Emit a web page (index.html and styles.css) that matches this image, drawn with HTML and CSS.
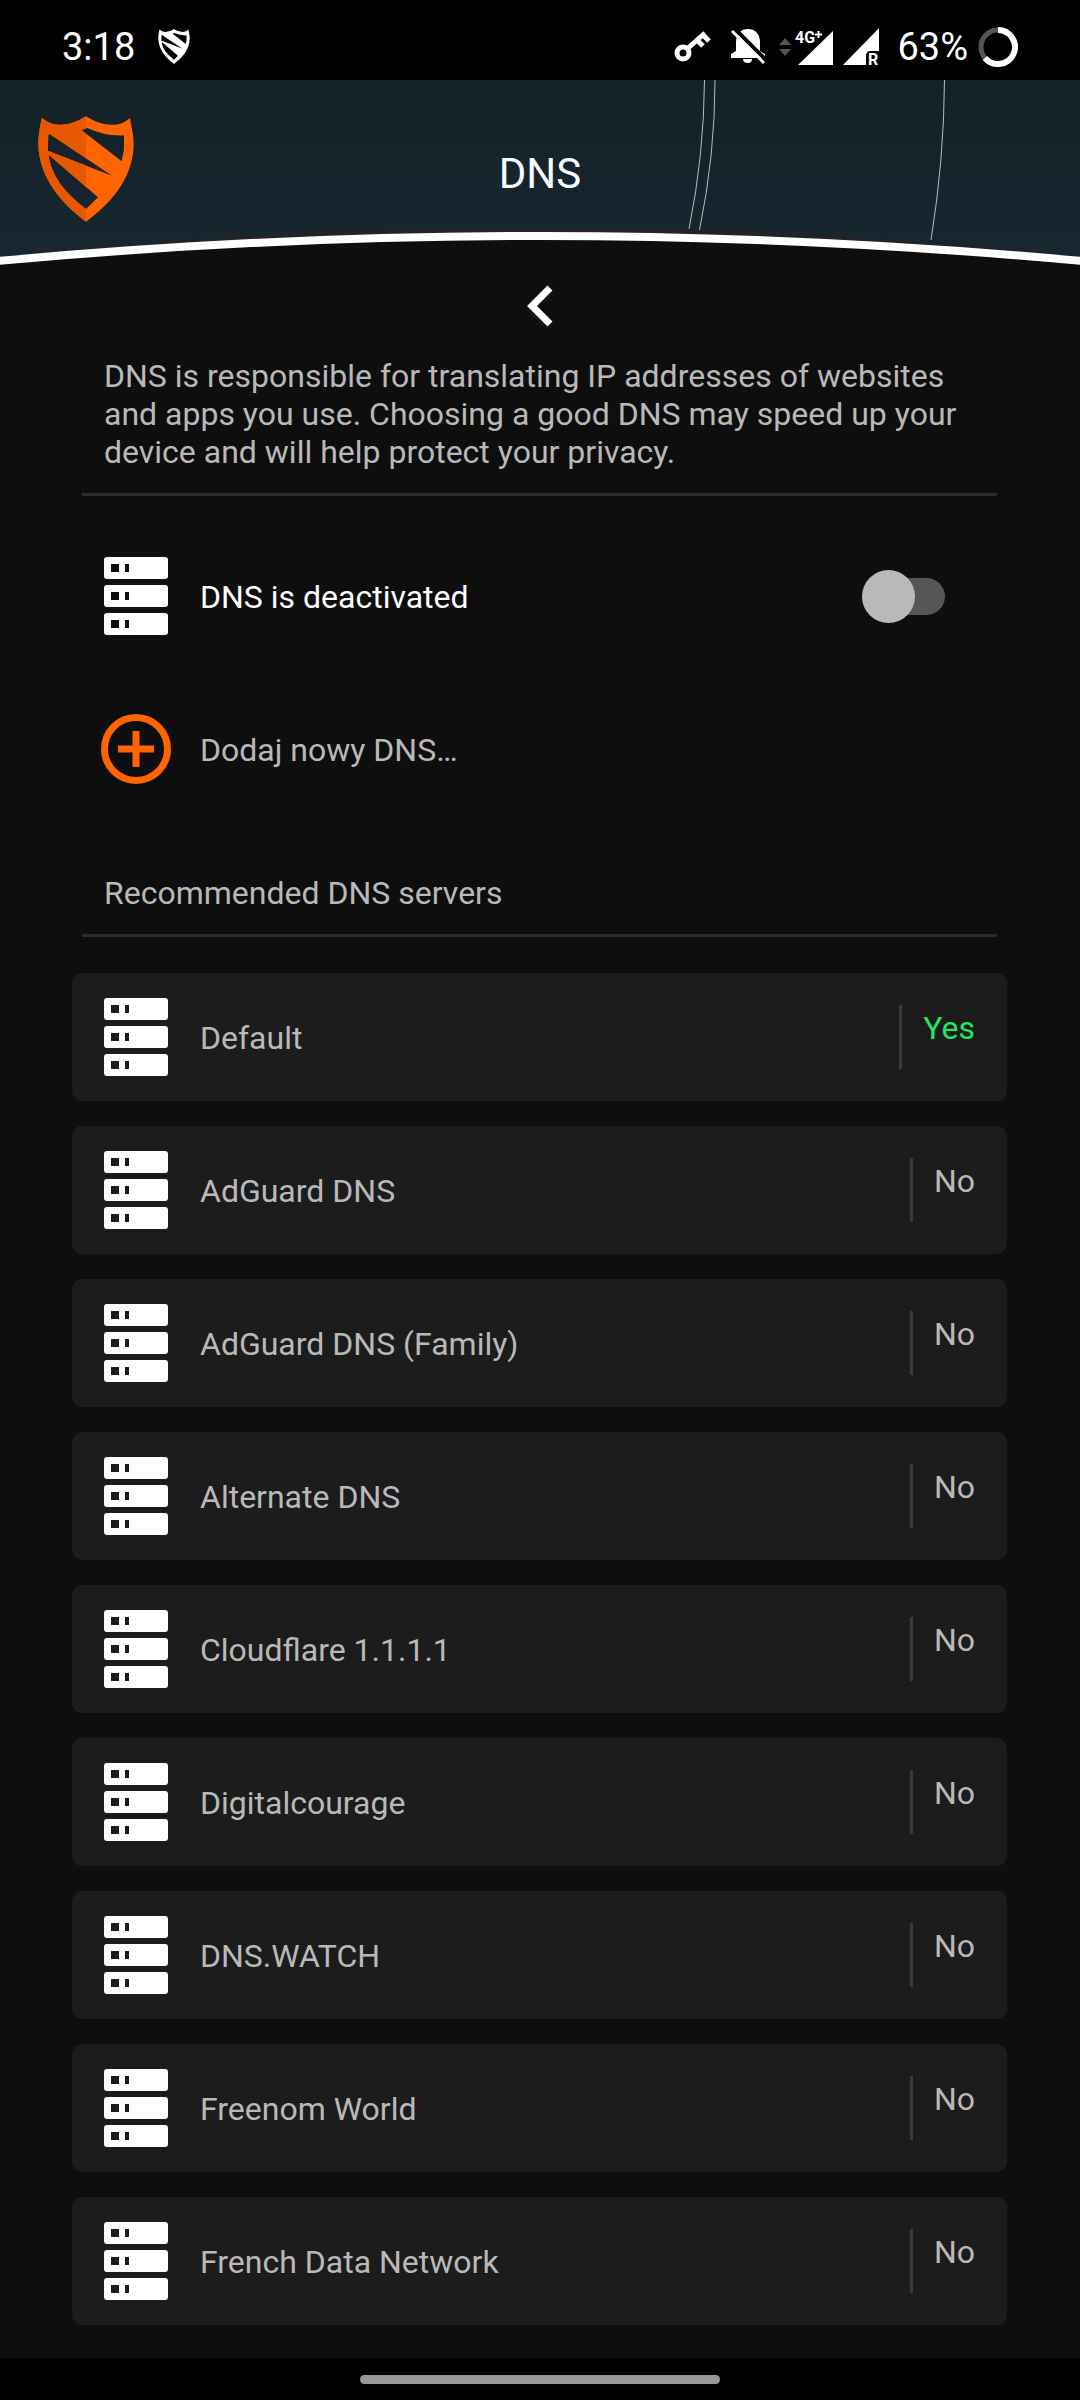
FILE: index.html
```html
<!DOCTYPE html>
<html lang="en">
<head>
<meta charset="utf-8">
<meta name="viewport" content="width=device-width, initial-scale=1">
<title>DNS</title>
<link rel="stylesheet" href="styles.css">
</head>
<body>
<svg class="sprite" aria-hidden="true">
  <symbol id="server" viewBox="0 0 64 78">
    <path fill="currentColor" fill-rule="evenodd" d="M3 0H61a3 3 0 0 1 3 3V19a3 3 0 0 1-3 3H3a3 3 0 0 1-3-3V3a3 3 0 0 1 3-3ZM7 7V15H15V7ZM21 7V15H25V7ZM3 28H61a3 3 0 0 1 3 3V47a3 3 0 0 1-3 3H3a3 3 0 0 1-3-3V31a3 3 0 0 1 3-3ZM7 35V43H15V35ZM21 35V43H25V35ZM3 56H61a3 3 0 0 1 3 3V75a3 3 0 0 1-3 3H3a3 3 0 0 1-3-3V59a3 3 0 0 1 3-3ZM7 63V71H15V63ZM21 63V71H25V63Z"/>
  </symbol>
  <symbol id="shield" viewBox="112 349 288 318">
    <path fill="currentColor" fill-rule="evenodd" d="M124 354C160 388 212 378 256 350C300 378 354 388 388 354C391 380 399 400 399 435C396 540 330 610 256 666C180 610 113 530 113 430C114 400 118 380 124 354ZM242 391L260 385Q310 409 370 407L370 450L363 485ZM147 403L334 528L141 453L143 405ZM144 465L292 593L256 628C200 585 150 530 144 465Z"/>
  </symbol>
</svg>

<div class="status-bar">
  <span class="clock">3:18</span>
  <svg class="status-shield" aria-hidden="true"><use href="#shield"/></svg>
  <div class="status-icons">
    <svg width="37" height="34" viewBox="0 0 37 34" aria-hidden="true">
      <circle cx="9" cy="23" r="6" fill="none" stroke="#fff" stroke-width="5"/>
      <path d="M13 19 31 3M23 10l6 6M29 5l6 6" fill="none" stroke="#fff" stroke-width="5"/>
    </svg>
    <svg class="bell" width="36" height="36" viewBox="0 0 36 36" aria-hidden="true">
      <path fill="#fff" d="M18 0C10 0 6 6 6 13V22L1 25V29H35V25L30 22V13C30 6 26 0 18 0ZM13 30H22Q22 34 18 34Q13 34 13 30Z"/>
      <path d="M4-1 36 31" stroke="#000" stroke-width="4"/>
      <path d="M2 2 34 34" stroke="#fff" stroke-width="3"/>
    </svg>
    <svg class="traffic" width="12" height="18" viewBox="0 0 12 18" aria-hidden="true">
      <path fill="#555" d="M6 0 12 7H0ZM6 18 0 11H12Z"/>
    </svg>
    <svg class="signal" width="38" height="38" viewBox="0 0 38 38" role="img" aria-label="4G+ signal">
      <path fill="#fff" d="M38 3V37H3Z"/>
      <text class="net-label" x="0" y="15">4G</text>
      <path d="M23 6.500H29M26 3.500V9.500" stroke="#000" stroke-width="6"/>
      <path d="M20 6.500H27M23.500 3V10" stroke="#fff" stroke-width="2"/>
    </svg>
    <svg class="roaming" width="36" height="38" viewBox="0 0 36 38" role="img" aria-label="Roaming signal">
      <path fill="#fff" d="M36 0V37H0Z"/>
      <path d="M23 38V28Q23 23 28 23H37V38Z"/>
      <text class="net-label" x="25" y="37">R</text>
    </svg>
    <span class="battery-level">63%</span>
    <svg width="40" height="40" viewBox="0 0 40 40" aria-hidden="true">
      <circle cx="20" cy="20" r="17" fill="none" stroke="#555" stroke-width="5"/>
      <path d="M20 3A17 17 0 1 1 7 31" fill="none" stroke="#fff" stroke-width="6"/>
    </svg>
  </div>
</div>

<header class="hero">
  <svg class="hero-art" viewBox="0 0 1080 190" preserveAspectRatio="none" aria-hidden="true">
    <defs>
      <linearGradient id="sky" x1="0" y1="0" x2="0" y2="1">
        <stop offset="0" stop-color="#152128"/>
        <stop offset="1" stop-color="#172630"/>
      </linearGradient>
    </defs>
    <path fill="url(#sky)" d="M0 0H1080V180Q540 132 0 180Z"/>
    <path fill="#272323" d="M0 177Q540 119 1080 177V180Q540 132 0 180Z"/>
    <g fill="none" stroke="#b4bcc0" stroke-width="1">
      <path d="M704.500 0Q704 75 689 149"/>
      <path d="M715 0Q715 75 699.500 150"/>
      <path d="M944.500 0Q944 80 931 160"/>
    </g>
    <path fill="none" stroke="#fff" stroke-width="8" d="M-2 181Q540 131 1082 181"/>
  </svg>
  <svg class="logo" role="img" aria-label="Shield logo">
    <defs>
      <clipPath id="left-half"><rect width="48" height="106"/></clipPath>
    </defs>
    <use href="#shield" class="logo-base"/>
    <use href="#shield" class="logo-shade" clip-path="url(#left-half)"/>
  </svg>
  <h1>DNS</h1>
</header>

<main>
  <button class="back" type="button" aria-label="Back">
    <svg width="26" height="42" viewBox="0 0 26 42" aria-hidden="true"><path d="M23 3 5 21 23 39" fill="none" stroke="#fff" stroke-width="7"/></svg>
  </button>

  <p class="intro">DNS is responsible for translating IP addresses of websites and apps you use. Choosing a good DNS may speed up your device and will help protect your privacy.</p>

  <div class="actions">
    <div class="row">
      <svg class="server"><use href="#server"/></svg>
      <label class="name active" for="dns-toggle">DNS is deactivated</label>
      <input class="switch" id="dns-toggle" type="checkbox" role="switch">
    </div>
    <button class="row" type="button">
      <svg class="add" viewBox="0 0 70 70" aria-hidden="true">
        <circle cx="35" cy="35" r="31.500" fill="none" stroke="#ff6400" stroke-width="7"/>
        <path d="M35 17V53M17 35H53" stroke="#ff6400" stroke-width="7"/>
      </svg>
      <span class="name">Dodaj nowy DNS…</span>
    </button>
  </div>

  <h2>Recommended DNS servers</h2>

  <ul class="servers">
    <li><button class="row card" type="button"><svg class="server"><use href="#server"/></svg><span class="name">Default</span><span class="state on">Yes</span></button></li>
    <li><button class="row card" type="button"><svg class="server"><use href="#server"/></svg><span class="name">AdGuard DNS</span><span class="state">No</span></button></li>
    <li><button class="row card" type="button"><svg class="server"><use href="#server"/></svg><span class="name">AdGuard DNS (Family)</span><span class="state">No</span></button></li>
    <li><button class="row card" type="button"><svg class="server"><use href="#server"/></svg><span class="name">Alternate DNS</span><span class="state">No</span></button></li>
    <li><button class="row card" type="button"><svg class="server"><use href="#server"/></svg><span class="name">Cloudflare 1.1.1.1</span><span class="state">No</span></button></li>
    <li><button class="row card" type="button"><svg class="server"><use href="#server"/></svg><span class="name">Digitalcourage</span><span class="state">No</span></button></li>
    <li><button class="row card" type="button"><svg class="server"><use href="#server"/></svg><span class="name">DNS.WATCH</span><span class="state">No</span></button></li>
    <li><button class="row card" type="button"><svg class="server"><use href="#server"/></svg><span class="name">Freenom World</span><span class="state">No</span></button></li>
    <li><button class="row card" type="button"><svg class="server"><use href="#server"/></svg><span class="name">French Data Network</span><span class="state">No</span></button></li>
  </ul>
</main>

<div class="nav-bar"><div class="handle"></div></div>
</body>
</html>
```

FILE: styles.css
```css
* { box-sizing: border-box; }

body {
  margin: 0;
  min-height: 100vh;
  display: flex;
  flex-direction: column;
  background: #0e0e0e;
  color: #b9b9b9;
  font: 32px/38px Roboto, "Noto Sans", sans-serif;
}

svg { display: block; flex: none; }
.sprite { position: absolute; width: 0; height: 0; }

button {
  margin: 0;
  padding: 0;
  border: 0;
  background: none;
  color: inherit;
  font: inherit;
  text-align: left;
  cursor: pointer;
}

/* Status bar */
.status-bar {
  display: flex;
  align-items: center;
  height: 80px;
  padding: 13px 62px 0 62px;
  background: #000;
  color: #fff;
  font-size: 38px;
}
.status-shield { width: 32px; height: 35px; margin-left: 23px; }
.status-icons { display: flex; align-items: center; margin-left: auto; }
.bell { margin-left: 19px; }
.traffic { margin-left: 13px; }
.signal { margin-left: 4px; overflow: visible; }
.roaming { margin-left: 10px; overflow: visible; }
.net-label { fill: #fff; font-size: 16px; font-weight: 700; }
.battery-level { margin: 0 10px 0 18px; }

/* Header with curved lower edge */
.hero {
  position: relative;
  height: 190px;
  padding-top: 69px;
}
.hero-art { position: absolute; inset: 0; width: 100%; height: 100%; }
.logo { position: absolute; left: 38px; top: 36px; width: 96px; height: 106px; }
.logo-base { color: #ff6400; }
.logo-shade { color: #e85800; }
h1 {
  position: relative;
  margin: 0;
  color: #f4fbff;
  font-size: 42px;
  font-weight: 400;
  line-height: 50px;
  text-align: center;
}

/* Content */
main {
  flex: 1;
  display: flex;
  flex-direction: column;
  padding: 0 73px 33px 72px;
}
.back { align-self: center; padding: 15px 20px; }
.intro, h2 {
  margin: 0 10px;
  padding: 0 22px 22px;
  border-bottom: 3px solid #2c2c2c;
  font-size: 32px;
  font-weight: 400;
}
.intro { margin-top: 15px; }
h2 { margin-top: 61px; }

.actions {
  display: flex;
  flex-direction: column;
  gap: 25px;
  margin-top: 36px;
}
.row {
  display: flex;
  align-items: center;
  width: 100%;
  height: 128px;
  padding: 0 32px;
}
.server { width: 64px; height: 78px; color: #fff; }
.add { width: 70px; height: 70px; margin: 0 -3px; }
.name { flex: 1; padding: 2px 0 0 32px; }
.active { color: #fff; }

.switch {
  appearance: none;
  position: relative;
  width: 76px;
  height: 37px;
  margin: 0 30px 0 0;
  border-radius: 19px;
  background: #565656;
}
.switch::before {
  content: "";
  position: absolute;
  left: -7px;
  top: -8px;
  width: 53px;
  height: 53px;
  border-radius: 50%;
  background: #b9b9b9;
}
.switch:checked::before { left: 30px; background: #ff6400; }

.servers {
  display: flex;
  flex-direction: column;
  gap: 25px;
  margin: 36px 0 0;
  padding: 0;
  list-style: none;
}
.card { border-radius: 10px; background: #1c1c1c; }
.state {
  height: 64px;
  padding: 4px 0 0 21px;
  border-left: 3px solid #3a3a3a;
}
.on { color: #23e566; }

/* Gesture bar */
.nav-bar {
  display: flex;
  align-items: center;
  justify-content: center;
  height: 42px;
  background: #000;
}
.handle { width: 33.333%; height: 9px; border-radius: 5px; background: #999; }
```
